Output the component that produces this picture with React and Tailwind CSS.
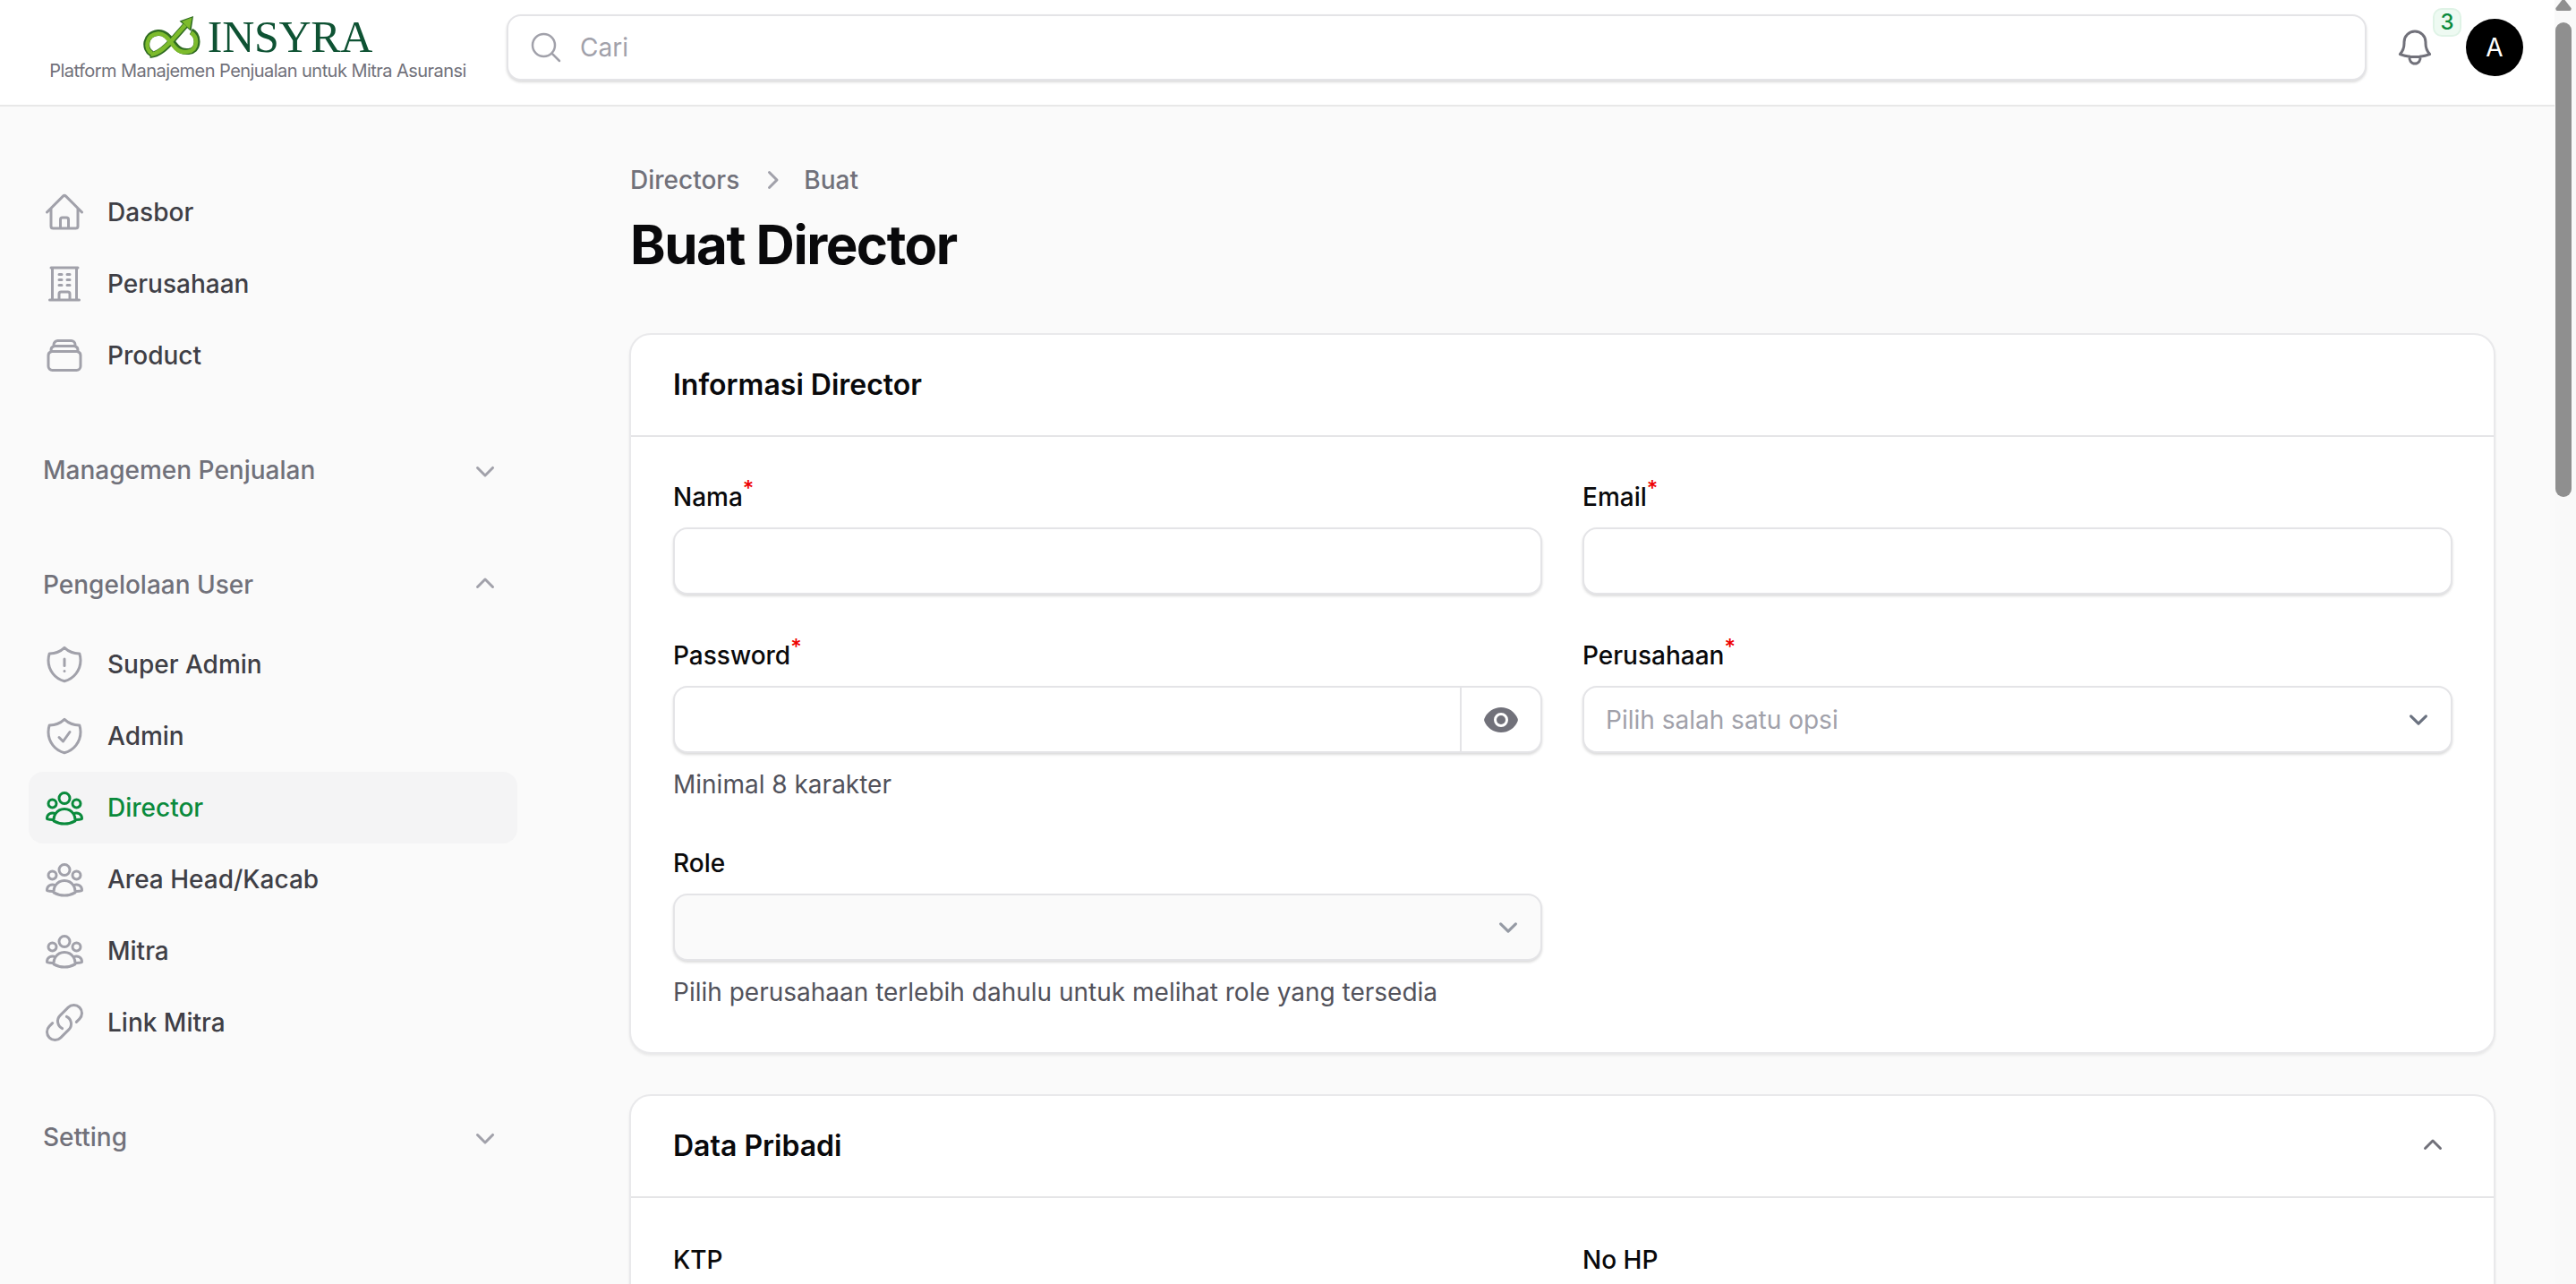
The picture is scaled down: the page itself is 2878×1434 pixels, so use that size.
import React from "react";

const P = {
  home: "m2.25 12 8.954-8.955c.44-.439 1.152-.439 1.591 0L21.75 12M4.5 9.75v10.125c0 .621.504 1.125 1.125 1.125H9.75v-4.875c0-.621.504-1.125 1.125-1.125h2.25c.621 0 1.125.504 1.125 1.125V21h4.125c.621 0 1.125-.504 1.125-1.125V9.75M8.25 21h8.25",
  building: "M3.75 21h16.5M4.5 3h15M5.25 3v18m13.5-18v18M9 6.75h1.5m-1.5 3h1.5m-1.5 3h1.5m3-6H15m-1.5 3H15m-1.5 3H15M9 21v-3.375c0-.621.504-1.125 1.125-1.125h3.75c.621 0 1.125.504 1.125 1.125V21",
  stack: "M6 6.878V6a2.25 2.25 0 0 1 2.25-2.25h7.5A2.25 2.25 0 0 1 18 6v.878m-12 0c.235-.083.487-.128.75-.128h10.5c.263 0 .515.045.75.128m-12 0A2.25 2.25 0 0 0 4.5 9v.878m13.5-3A2.25 2.25 0 0 1 19.5 9v.878m0 0a2.246 2.246 0 0 0-.75-.128H5.25c-.263 0-.515.045-.75.128m15 0A2.25 2.25 0 0 1 21 12v6a2.25 2.25 0 0 1-2.25 2.25H5.25A2.25 2.25 0 0 1 3 18v-6c0-.98.626-1.813 1.5-2.122",
  shieldX: "M12 9v3.75m0-10.036A11.959 11.959 0 0 1 3.598 6 11.99 11.99 0 0 0 3 9.75c0 5.592 3.824 10.29 9 11.622 5.176-1.332 9-6.03 9-11.622 0-1.31-.21-2.57-.598-3.75h-.152c-3.196 0-6.1-1.25-8.25-3.286Zm0 13.036h.008v.008H12v-.008Z",
  shieldC: "M9 12.75 11.25 15 15 9.75m-3-7.036A11.959 11.959 0 0 1 3.598 6 11.99 11.99 0 0 0 3 9.749c0 5.592 3.824 10.29 9 11.623 5.176-1.332 9-6.03 9-11.622 0-1.31-.21-2.571-.598-3.751h-.152c-3.196 0-6.1-1.248-8.25-3.285Z",
  group: "M18 18.72a9.094 9.094 0 0 0 3.741-.479 3 3 0 0 0-4.682-2.72m.94 3.198.001.031c0 .225-.012.447-.037.666A11.944 11.944 0 0 1 12 21c-2.17 0-4.207-.576-5.963-1.584A6.062 6.062 0 0 1 6 18.719m12 0a5.971 5.971 0 0 0-.941-3.197m0 0A5.995 5.995 0 0 0 12 12.75a5.995 5.995 0 0 0-5.058 2.772m0 0a3 3 0 0 0-4.681 2.72 8.986 8.986 0 0 0 3.74.477m.94-3.197a5.971 5.971 0 0 0-.94 3.197M15 6.75a3 3 0 1 1-6 0 3 3 0 0 1 6 0Zm6 3a2.25 2.25 0 1 1-4.5 0 2.25 2.25 0 0 1 4.5 0Zm-13.5 0a2.25 2.25 0 1 1-4.5 0 2.25 2.25 0 0 1 4.5 0Z",
  link: "M13.19 8.688a4.5 4.5 0 0 1 1.242 7.244l-4.5 4.5a4.5 4.5 0 0 1-6.364-6.364l1.757-1.757m13.35-.622 1.757-1.757a4.5 4.5 0 0 0-6.364-6.364l-4.5 4.5a4.5 4.5 0 0 0 1.242 7.244",
  bell: "M14.857 17.082a23.848 23.848 0 0 0 5.454-1.31A8.967 8.967 0 0 1 18 9.75V9A6 6 0 0 0 6 9v.75a8.967 8.967 0 0 1-2.312 6.022c1.733.64 3.56 1.085 5.455 1.31m5.714 0a24.255 24.255 0 0 1-5.714 0m5.714 0a3 3 0 1 1-5.714 0",
  search: "m21 21-5.197-5.197m0 0A7.5 7.5 0 1 0 5.196 5.196a7.5 7.5 0 0 0 10.607 10.607Z",
};

const Outline = ({ d, className }) => (
  <svg viewBox="0 0 24 24" fill="none" stroke="currentColor" strokeWidth="1.5" strokeLinecap="round" strokeLinejoin="round" className={className}>
    <path d={d} />
  </svg>
);

const Mini = ({ d, className }) => (
  <svg viewBox="0 0 20 20" fill="currentColor" className={className}>
    <path fillRule="evenodd" clipRule="evenodd" d={d} />
  </svg>
);

const DOWN = "M5.22 8.22a.75.75 0 0 1 1.06 0L10 11.94l3.72-3.72a.75.75 0 1 1 1.06 1.06l-4.25 4.25a.75.75 0 0 1-1.06 0L5.22 9.28a.75.75 0 0 1 0-1.06Z";
const UP = "M14.78 11.78a.75.75 0 0 1-1.06 0L10 8.06l-3.72 3.72a.75.75 0 0 1-1.06-1.06l4.25-4.25a.75.75 0 0 1 1.06 0l4.25 4.25a.75.75 0 0 1 0 1.06Z";
const RIGHT = "M8.22 5.22a.75.75 0 0 1 1.06 0l4.25 4.25a.75.75 0 0 1 0 1.06l-4.25 4.25a.75.75 0 0 1-1.06-1.06L11.94 10 8.22 6.28a.75.75 0 0 1 0-1.06Z";

const Logo = () => (
  <svg viewBox="12 5 64 50" className="w-[67px] h-[50px] shrink-0" fill="none" strokeLinecap="butt" strokeLinejoin="miter">
    <g stroke="#2f6b22" strokeWidth="7">
      <path d="M20 49 C11 44 12 27 27 25.5 C37 24.5 42 36 48 42 C54 48 70 50 70.5 36 C70.7 30 68 26 64 24" />
      <path d="M18 50.5 C28 50 36 42 43 34 L58 17" />
    </g>
    <path d="M66.5 7 L51 12.5 L64 24 Z" fill="#2f6b22" />
    <g stroke="#7dbb2c" strokeWidth="4.6">
      <path d="M20 48.5 C12 44 13 28 27 26.5 C36 25.5 41 37 47 43 C53 49 69 49.5 69.5 36 C69.7 31 67 27.5 64 25.5" />
      <path d="M19 50 C28 49 36 41 43 33.5 L57.5 17" />
    </g>
    <path d="M65 8.5 L53.5 13 L62.5 21.5 Z" fill="#7dbb2c" />
  </svg>
);

const NavItem = ({ icon, label, active }) => (
  <a className={`flex h-[80px] items-center gap-[24px] rounded-[16px] px-[16px] text-[28px] leading-[40px] font-medium ${active ? "bg-[#f4f4f5] text-[#0a8a3c]" : "text-[#3f3f46]"}`}>
    <Outline d={icon} className={`h-[48px] w-[48px] shrink-0 ${active ? "text-[#0a8a3c]" : "text-[#a1a1aa]"}`} />
    <span>{label}</span>
  </a>
);

const GroupLabel = ({ label, open }) => (
  <div className="flex h-[80px] items-center justify-between pl-[16px] pr-[16px]">
    <span className="text-[28px] leading-[40px] font-medium text-[#71717a]">{label}</span>
    <Mini d={open ? UP : DOWN} className="h-[40px] w-[40px] text-[#a1a1aa]" />
  </div>
);

const Label = ({ children, required }) => (
  <label className="flex h-[40px] items-center text-[28px] leading-[40px] font-medium text-[#09090b]">
    <span>{children}</span>
    {required && <sup className="mt-[6px] text-[24px] font-medium leading-none text-[#ee0000]">*</sup>}
  </label>
);

const Box = ({ children, className = "" }) => (
  <div className={`mt-[14px] flex h-[75px] items-center rounded-[16px] border-2 border-[#e4e4e7] shadow-[0_2px_3px_rgba(0,0,0,0.14)] ${className}`}>
    {children}
  </div>
);

const Chevron = ({ className = "" }) => (
  <svg viewBox="0 0 20 20" fill="none" stroke="#6b7280" strokeWidth="1.5" strokeLinecap="round" strokeLinejoin="round" className={`h-[42px] w-[42px] shrink-0 ${className}`}>
    <path d="m6 8 4 4 4-4" />
  </svg>
);

const Help = ({ children }) => (
  <p className="mt-[15px] text-[28px] leading-[40px] text-[#52525b]">{children}</p>
);

const Card = ({ title, right, children, bodyClass }) => (
  <section className="rounded-[24px] border-2 border-[#e9e9eb] bg-white shadow-[0_2px_3px_rgba(0,0,0,0.07)]">
    <div className="box-content flex h-[112px] items-center justify-between border-b-2 border-[#e5e5e7] pl-[47px] pr-[46px]">
      <h2 className="text-[32px] leading-[48px] font-semibold text-[#09090b]">{title}</h2>
      {right}
    </div>
    <div className={`grid grid-cols-[971px_1fr] gap-x-[45px] pl-[47px] pr-[46px] ${bodyClass}`}>{children}</div>
  </section>
);

export default function App() {
  return (
    <div className="flex h-[1434px] w-[2878px] overflow-hidden bg-[#fafafa] font-[Inter,sans-serif]">
      <div className="flex min-w-0 flex-1 flex-col">
        <header className="flex h-[119px] shrink-0 items-center border-b-2 border-[#e8e8e8] bg-white pb-[12px] pr-[34px]">
          <div className="flex w-[566px] shrink-0 flex-col items-center pl-[56px] pr-[46px] pt-[3px]">
            <div className="flex h-[50px] items-center">
              <Logo />
              <span className="ml-[5px] font-['Liberation_Serif',serif] text-[50px] leading-[50px] tracking-[-0.3px] text-[#0e5233]">INSYRA</span>
            </div>
            <span className="-mt-[1px] whitespace-nowrap text-[20px] leading-[28px] tracking-[-0.55px] text-[#71717a]">Platform Manajemen Penjualan untuk Mitra Asuransi</span>
          </div>
          <div className="flex h-[74px] w-[2078px] shrink-0 items-center gap-[16px] rounded-[16px] border-2 border-[#e4e4e7] bg-white pl-[22px] shadow-[0_2px_3px_rgba(0,0,0,0.14)]">
            <Outline d={P.search} className="h-[40px] w-[40px] text-[#a1a1aa]" />
            <span className="ml-[2px] text-[28px] leading-[40px] text-[#a1a1aa]">Cari</span>
          </div>
          <div className="relative ml-[30px] h-[48px] w-[48px] shrink-0">
            <Outline d={P.bell} className="h-[48px] w-[48px] text-[#71717a]" />
            <span className="absolute -top-[20px] left-[44px] flex h-[32px] w-[32px] items-center justify-center rounded-[10px] border-2 border-[#dff3e6] bg-[#eefaf2] text-[24px] leading-none font-medium text-[#0a8a3c]">3</span>
          </div>
          <div className="ml-[33px] flex h-[64px] w-[64px] shrink-0 items-center justify-center rounded-full bg-black text-[28px] font-normal text-white">A</div>
        </header>

        <div className="flex min-h-0 flex-1">
          <aside className="w-[639px] shrink-0 px-[32px] pt-[78px] pr-[61px]">
            <nav className="flex flex-col">
              <NavItem icon={P.home} label="Dasbor" />
              <NavItem icon={P.building} label="Perusahaan" />
              <NavItem icon={P.stack} label="Product" />
            </nav>
            <div className="mt-[48px]"><GroupLabel label="Managemen Penjualan" /></div>
            <div className="mt-[48px]"><GroupLabel label="Pengelolaan User" open /></div>
            <nav className="mt-[9px] flex flex-col">
              <NavItem icon={P.shieldX} label="Super Admin" />
              <NavItem icon={P.shieldC} label="Admin" />
              <NavItem icon={P.group} label="Director" active />
              <NavItem icon={P.group} label="Area Head/Kacab" />
              <NavItem icon={P.group} label="Mitra" />
              <NavItem icon={P.link} label="Link Mitra" />
            </nav>
            <div className="mt-[48px]"><GroupLabel label="Setting" /></div>
          </aside>

          <main className="min-w-0 flex-1 overflow-hidden pl-[64px] pr-[66px] pt-[62px]">
            <nav className="ml-[1px] flex h-[40px] items-center gap-[16px] text-[28px] leading-[40px] font-medium text-[#71717a]">
              <span>Directors</span>
              <Mini d={RIGHT} className="h-[40px] w-[40px] text-[#a1a1aa]" />
              <span>Buat</span>
            </nav>
            <h1 className="ml-[1px] mt-[16px] text-[60px] leading-[72px] font-bold tracking-[-1.5px] text-[#09090b]">Buat Director</h1>

            <div className="mt-[63px] flex flex-col gap-[45px]">
              <Card title="Informasi Director" bodyClass="gap-y-[48px] pb-[47px] pt-[47px]">
                <div>
                  <Label required>Nama</Label>
                  <Box className="bg-white" />
                </div>
                <div>
                  <Label required>Email</Label>
                  <Box className="bg-white" />
                </div>
                <div>
                  <Label required>Password</Label>
                  <Box className="bg-white">
                    <div className="flex-1" />
                    <div className="flex h-full w-[90px] items-center justify-center border-l-2 border-[#e4e4e7]">
                      <svg viewBox="0 0 20 20" fill="#71717a" className="h-[40px] w-[40px]">
                        <path d="M10 12.5a2.5 2.5 0 1 0 0-5 2.5 2.5 0 0 0 0 5Z" />
                        <path fillRule="evenodd" clipRule="evenodd" d="M.664 10.59a1.651 1.651 0 0 1 0-1.186A10.004 10.004 0 0 1 10 3c4.257 0 7.893 2.66 9.336 6.41.147.381.146.804 0 1.186A10.004 10.004 0 0 1 10 17c-4.257 0-7.893-2.66-9.336-6.41ZM14 10a4 4 0 1 1-8 0 4 4 0 0 1 8 0Z" />
                      </svg>
                    </div>
                  </Box>
                  <Help>Minimal 8 karakter</Help>
                </div>
                <div>
                  <Label required>Perusahaan</Label>
                  <Box className="justify-between bg-white pl-[24px] pr-[15px]">
                    <span className="text-[28px] leading-[40px] text-[#a1a1aa]">Pilih salah satu opsi</span>
                    <Chevron />
                  </Box>
                </div>
                <div>
                  <Label>Role</Label>
                  <Box className="justify-end bg-[#fafafa] pr-[15px]">
                    <Chevron className="opacity-70" />
                  </Box>
                  <Help>Pilih perusahaan terlebih dahulu untuk melihat role yang tersedia</Help>
                </div>
              </Card>

              <Card title="Data Pribadi" bodyClass="gap-y-[48px] pb-[46px] pt-[49px]" right={<Mini d={UP} className="mr-[2px] h-[40px] w-[40px] text-[#71717a]" />}>
                <div>
                  <Label>KTP</Label>
                  <Box className="bg-white" />
                </div>
                <div>
                  <Label>No HP</Label>
                  <Box className="bg-white" />
                </div>
              </Card>
            </div>
          </main>
        </div>
      </div>

      <div className="flex h-full w-[24px] shrink-0 flex-col items-center bg-[#f9f9f9] pr-[4px]">
        <svg viewBox="0 0 18 12" className="h-[12px] w-[18px] shrink-0" fill="#8f8f8f">
          <path d="M9 -2 L17.6 9 Q18 12 16 12 L2 12 Q0 12 0.4 9 Z" />
        </svg>
        <div className="mt-[13px] h-[530px] w-[18px] rounded-[9px] bg-[#8f8f8f]" />
      </div>
    </div>
  );
}
